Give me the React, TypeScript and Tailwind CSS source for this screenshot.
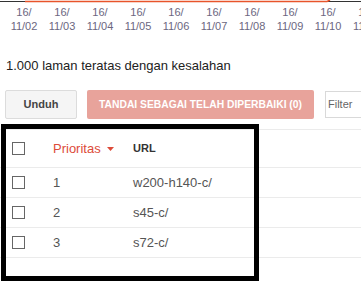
const dates = ['11/02', '11/03', '11/04', '11/05', '11/06', '11/07', '11/08', '11/09', '11/10', '11/11'];

const rows = [
  { rank: '1', url: 'w200-h140-c/' },
  { rank: '2', url: 's45-c/' },
  { rank: '3', url: 's72-c/' },
];

const Box = () => <span className="block w-[13px] h-[13px] border border-[#666] bg-white" />;

export default function App() {
  return (
    <div className="relative w-[361px] h-[292px] overflow-hidden bg-white font-['Liberation_Sans',Arial,sans-serif] text-[#222]">
      {/* chart baseline */}
      <svg width="361" height="3" className="block">
        <line x1="0" y1="1.5" x2="361" y2="1.5" stroke="#333" strokeWidth="1" />
        <polyline points="25,1.5 327,1.5 330,0" fill="none" stroke="#e8542b" strokeWidth="1.5" />
      </svg>

      <div className="flex pl-[5px] pt-[2px]">
        {dates.map((d) => (
          <div key={d} className="w-[38px] shrink-0 text-center text-[11px] leading-[14px] text-[#6b6680]">
            <div>16/</div>
            <div>{d}</div>
          </div>
        ))}
      </div>

      <div className="pl-[6px] pt-[25px] text-[13px] leading-[15px]">1.000 laman teratas dengan kesalahan</div>

      <div className="flex items-center pl-[5px] pt-[17px]">
        <button className="h-[29px] w-[72px] shrink-0 rounded-[2px] border border-[#dcdcdc] bg-[#f5f5f5] text-[11px] font-bold text-[#444]">
          Unduh
        </button>
        <button className="ml-[10px] h-[29px] w-[227px] shrink-0 whitespace-nowrap rounded-[2px] bg-[#e8a39b] text-[10.3px] font-bold text-white">
          TANDAI SEBAGAI TELAH DIPERBAIKI (0)
        </button>
        <div className="ml-[11px] flex h-[27px] w-[60px] shrink-0 items-center border border-[#d9d9d9] pl-[2px] text-[11px] text-[#666]">
          Filter
        </div>
      </div>

      <div className="mt-[10px] border-t border-[#ebebeb]">
        <div className="flex h-[38px] items-center border-b border-[#ebebeb] text-[13px]">
          <div className="w-[53px] pl-[12px]"><Box /></div>
          <div className="flex w-[80px] items-center text-[#dd4b39]">
            Prioritas
            <svg width="7" height="4" className="ml-[6px]"><polygon points="0,0 7,0 3.5,4" fill="#dd4b39" /></svg>
          </div>
          <div className="text-[11px] font-bold text-[#333]">URL</div>
        </div>
        {rows.map((r) => (
          <div key={r.rank} className="flex h-[30px] items-center border-b border-[#ebebeb] text-[13px] text-[#555]">
            <div className="w-[53px] pl-[12px]"><Box /></div>
            <div className="w-[80px]">{r.rank}</div>
            <div>{r.url}</div>
          </div>
        ))}
      </div>

      {/* annotation frame */}
      <div className="absolute left-[1px] top-[124px] h-[157px] w-[258px] border-[5px] border-black" />
    </div>
  );
}
